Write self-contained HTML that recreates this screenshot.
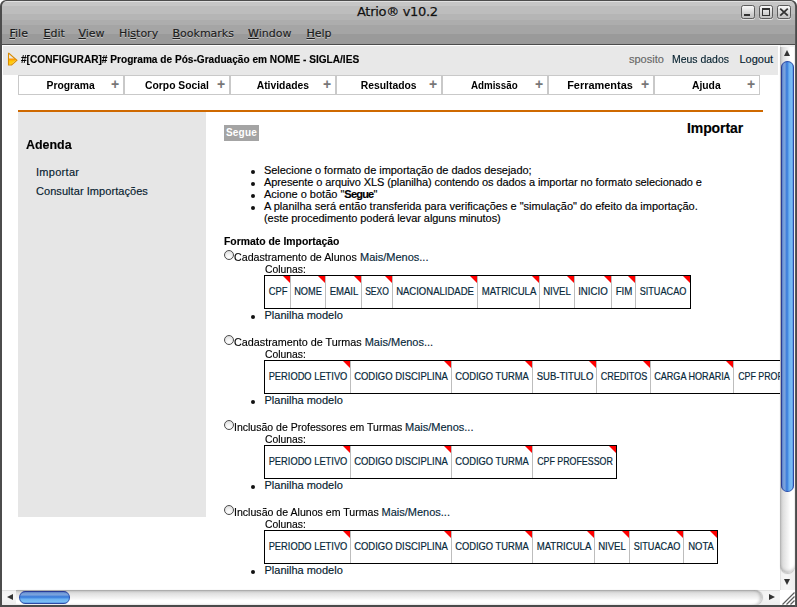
<!DOCTYPE html>
<html lang="pt-BR">
<head>
<meta charset="utf-8">
<title>Atrio® v10.2</title>
<style>
html,body{margin:0;padding:0;width:797px;height:607px;overflow:hidden;background:#fff;}
body{position:relative;font-family:"Liberation Sans",sans-serif;font-size:11px;line-height:12px;color:#000;}
*{box-sizing:border-box;}
.abs,.t{position:absolute;}
.t{white-space:nowrap;line-height:12px;font-size:11px;transform-origin:0 50%;}
a{color:inherit;text-decoration:none;}
/* ---------- window frame ---------- */
#frame{position:absolute;left:0;top:0;width:797px;height:607px;background:#4c4c4c;border-radius:6px 6px 0 0;}
#frameR{position:absolute;left:795px;top:6px;width:2px;height:601px;background:linear-gradient(to right,#595959 0,#595959 1px,#4a4a4a 1px,#4a4a4a 2px);z-index:30;}
#titlebar{position:absolute;left:2px;top:1px;width:793px;height:43px;border-radius:5px 5px 0 0;
  background:linear-gradient(to bottom,#e0e0e0 0,#e0e0e0 1px,#c6c6c6 1px,#c6c6c6 5px,#bdbdbd 5px,#bdbdbd 13px,#b5b5b5 13px,#b5b5b5 19px,#adadad 19px,#adadad 24px,#a5a5a5 24px,#a5a5a5 33px,#9a9a9a 33px,#9a9a9a 43px);}
#client{position:absolute;left:2px;top:45px;width:793px;height:560px;background:#fff;}
#wtitle{left:357px;top:3px;font-family:'DejaVu Sans',sans-serif;font-size:13px;letter-spacing:-.3px;line-height:18px;color:#111;text-shadow:0 1px 0 rgba(255,255,255,.35);}
.mi{top:27px;font-family:'DejaVu Sans',sans-serif;font-size:11px;line-height:14px;color:#1c1c1c;text-shadow:0 1px 0 rgba(255,255,255,.45);}
.mi,#wtitle{-webkit-text-stroke:.25px currentColor;}
.mi u{text-decoration:underline;text-underline-offset:1px;text-decoration-thickness:1px;}
.wb{position:absolute;top:5px;width:14px;height:14px;border:1px solid #5c5c5c;border-radius:2.5px;
  background:linear-gradient(to bottom,#f8f8f8 0,#e4e4e4 35%,#cecece 70%,#c2c2c2 100%);box-shadow:0 1px 0 rgba(255,255,255,.6),0 0 1px rgba(255,255,255,.4);}
/* ---------- page ---------- */
#band{left:3px;top:46px;width:775px;height:29px;background:#e8e8e8;}
.nav{top:75px;width:106px;height:20px;border:1px solid #c9c9c9;background:#fff;}
.nav b{position:absolute;left:0;top:3px;width:103px;text-align:center;font-size:11px;line-height:12px;white-space:nowrap;}
.nav b span{display:inline-block;transform:scaleX(.94);}
.nav i{position:absolute;right:3px;top:1px;width:10px;text-align:center;font-style:normal;font-weight:bold;font-size:14px;line-height:15px;color:#777;}
#rule{left:18px;top:110px;width:745px;height:2px;background:#cf6900;}
#side{left:18px;top:112px;width:188px;height:405px;background:#e6e6e6;}
.sx{display:inline-block;transform-origin:0 50%;}
.lk2{color:#07283a;}
.lnk{color:#05202e;-webkit-text-stroke:.4px #05202e;}
.t{-webkit-text-stroke:.15px currentColor;}
#segue{left:224px;top:125px;width:35px;height:16px;background:#a4a4a4;color:#fff;font-weight:bold;font-size:10px;line-height:16px;text-align:center;letter-spacing:.2px;}
.dot{position:absolute;width:4px;height:4px;margin:.5px 0 0 .5px;border-radius:50%;background:#111;}
.radio{position:absolute;width:10px;height:10px;border-radius:50%;border:1px solid #4c4c4c;
  background:radial-gradient(circle at 50% 75%,#fff 0,#f4f4f4 35%,#d6d6d6 100%);}
.tb{position:absolute;height:34px;border:1px solid #000;background:#fff;white-space:nowrap;font-size:0;}
.tb span{position:relative;display:inline-block;height:32px;border-right:1px solid #bdbdbd;font-size:11px;line-height:12px;vertical-align:top;overflow:hidden;}
.tb span:last-child{border-right:0;}
.tb span::after{content:"";position:absolute;right:0;top:0;border-style:solid;border-width:0 7px 7px 0;border-color:transparent #f00 transparent transparent;}
.tb span em{color:#07283a;-webkit-text-stroke:.2px #07283a;position:absolute;left:50%;top:9px;font-style:normal;transform-origin:50% 50%;}
/* ---------- scrollbars ---------- */
#vs{left:780px;top:45px;width:15px;height:545px;z-index:20;background:linear-gradient(to right,#cfcfcf 0,#f1f1f1 1px,#f6f6f6 7px,#ececec 15px);}
#vtrack{left:780px;top:47px;width:15px;height:526px;z-index:21;border-radius:0 0 7.5px 7.5px;
  background:linear-gradient(to right,#b0b0b0 0,#c8c8c8 1px,#dedede 3px,#efefef 7px,#f7f7f7 9px,#fff 10.5px,#fff 13.5px,#f0f0f0 15px);box-shadow:0 1px 1px rgba(0,0,0,.2),inset 0 -3px 3px -1px rgba(0,0,0,.18);}
#hs{left:2px;top:590px;width:778px;height:15px;z-index:20;background:linear-gradient(to bottom,#cfcfcf 0,#f1f1f1 1px,#f6f6f6 7px,#ececec 15px);}
#htrack{left:16px;top:590px;width:746px;height:15px;z-index:21;border-radius:0 7.5px 7.5px 0;
  background:linear-gradient(to bottom,#a0a0a0 0,#c4c4c4 1px,#dedede 3px,#efefef 7px,#f7f7f7 9px,#fff 10.5px,#fff 13px,#f0f0f0 15px);box-shadow:1px 0 1px rgba(0,0,0,.2),inset -3px 0 3px -1px rgba(0,0,0,.18);}
#corner{left:780px;top:590px;width:15px;height:15px;background:#fff;z-index:21;}
#vthumb{left:781px;top:61px;width:13px;height:431px;border-radius:6.5px;z-index:22;box-shadow:inset 0 0 0 1px rgba(40,58,150,.7);
  background:linear-gradient(to right,#2c3f94 0,#2c3f94 1px,#6c96d6 1.6px,#7ea5dd 4px,#4a85dc 5px,#3b7cd9 6px,#4a8ee4 7px,#6db1f0 8px,#78bcf4 10.5px,#5a98e4 12px,#3a66c0 12.6px,#35509f 13px);}
#hthumb{left:19px;top:591px;width:51px;height:13px;border-radius:6.5px;z-index:22;box-shadow:inset 0 0 0 1px rgba(40,58,150,.7);
  background:linear-gradient(to bottom,#2c3f94 0,#2c3f94 1px,#6c96d6 1.6px,#7ea5dd 4px,#4a85dc 5px,#3b7cd9 6px,#4a8ee4 7px,#6db1f0 8px,#78bcf4 10.5px,#5a98e4 12px,#3a66c0 12.6px,#35509f 13px);}
.arr{position:absolute;width:0;height:0;border-style:solid;z-index:23;}
</style>
</head>
<body>
<div id="frame"></div>
<div id="titlebar"></div>
<div id="client"></div>
<div id="frameR"></div>

<!-- title bar -->
<div class="t" id="wtitle">Atrio® v10.2</div>
<div class="t mi" style="left:9.5px"><u>F</u>ile</div>
<div class="t mi" style="left:43.5px"><u>E</u>dit</div>
<div class="t mi" style="left:78.5px"><u>V</u>iew</div>
<div class="t mi" style="left:119px">Hi<u>s</u>tory</div>
<div class="t mi" style="left:172.5px"><u>B</u>ookmarks</div>
<div class="t mi" style="left:248px"><u>W</u>indow</div>
<div class="t mi" style="left:306.5px"><u>H</u>elp</div>
<div class="wb" style="left:741px"><div class="abs" style="left:2px;top:8px;width:6px;height:2px;background:#333"></div></div>
<div class="wb" style="left:759px"><div class="abs" style="left:2px;top:2px;width:8px;height:8px;border:1px solid #333;border-top-width:2px"></div></div>
<div class="wb" style="left:777px"><svg class="abs" style="left:1px;top:1px" width="10" height="10" viewBox="0 0 10 10"><path d="M1.2 1.6 L8.8 8.6 M8.8 1.6 L1.2 8.6" stroke="#333" stroke-width="1.8" fill="none"/></svg></div>

<!-- header band -->
<div class="abs" id="band"></div>
<svg class="abs" style="left:7px;top:52px" width="12" height="14" viewBox="0 0 12 14"><defs><linearGradient id="ag" x1="0" y1="0" x2="0" y2="1"><stop offset="0" stop-color="#ff9500"/><stop offset=".28" stop-color="#ffa200"/><stop offset=".36" stop-color="#ffc400"/><stop offset="1" stop-color="#ffd21a"/></linearGradient></defs><path d="M1.6 6.4 L7.6 6.4 L9.6 8.4 L4.9 12.8 L1.6 12.8 Z" fill="url(#ag)"/><path d="M8.3 8.7 L4.6 12.2" stroke="#fff6d8" stroke-width="1" stroke-dasharray="1 .8" fill="none"/><path d="M1.5 1.4 L1.5 13 L4.6 13 L9.9 8.3 L1.9 1.4 Z" fill="none" stroke="#d98b00" stroke-width="1.1" stroke-linejoin="miter"/></svg>
<div class="t" style="left:21px;top:53px;font-weight:bold"><span style="display:inline-block;transform:scaleX(.919);transform-origin:0 50%">#[CONFIGURAR]# Programa de Pós-Graduação em NOME - SIGLA/IES</span></div>
<div class="t" style="left:629px;top:53px;color:#666">sposito</div>
<div class="t lnk" style="left:671.5px;top:53px"><span style="display:inline-block;transform:scaleX(.95);transform-origin:0 50%">Meus dados</span></div>
<div class="t lnk" style="left:739.5px;top:53px">Logout</div>

<!-- nav -->
<div class="abs nav" style="left:18px"><b><span>Programa</span></b><i>+</i></div>
<div class="abs nav" style="left:124px"><b><span>Corpo Social</span></b><i>+</i></div>
<div class="abs nav" style="left:230px"><b><span>Atividades</span></b><i>+</i></div>
<div class="abs nav" style="left:336px"><b><span>Resultados</span></b><i>+</i></div>
<div class="abs nav" style="left:442px"><b><span style="transform:scaleX(.89)">Admissão</span></b><i>+</i></div>
<div class="abs nav" style="left:548px"><b><span style="transform:scaleX(.995)">Ferramentas</span></b><i>+</i></div>
<div class="abs nav" style="left:654px"><b><span>Ajuda</span></b><i>+</i></div>

<div class="abs" id="rule"></div>
<div class="abs" id="side"></div>
<div class="t" style="left:26px;top:137px;font-size:13px;line-height:15px;font-weight:bold"><span style="display:inline-block;transform:scaleX(.957);transform-origin:0 50%">Adenda</span></div>
<div class="t lnk" style="left:36px;top:166px;letter-spacing:.29px">Importar</div>
<div class="t lnk" style="left:36px;top:185px;letter-spacing:.06px">Consultar Importações</div>

<!-- main -->
<div class="abs" id="segue">Segue</div>
<div class="t" style="left:687px;top:120px;font-size:14px;line-height:16px;font-weight:bold;letter-spacing:-.1px">Importar</div>

<div class="dot" style="left:250px;top:169px"></div>
<div class="dot" style="left:250px;top:181px"></div>
<div class="dot" style="left:250px;top:193px"></div>
<div class="dot" style="left:250px;top:205px"></div>
<div class="t" style="left:264px;top:164px;letter-spacing:-.04px">Selecione o formato de importação de dados desejado;</div>
<div class="t" style="left:264px;top:176px;letter-spacing:-.09px">Apresente o arquivo XLS (planilha) contendo os dados a importar no formato selecionado e</div>
<div class="t" style="left:264px;top:188px">Acione o botão "<b style="letter-spacing:-.8px">Segue</b>"</div>
<div class="t" style="left:264px;top:200px;letter-spacing:-.01px">A planilha será então transferida para verificações e "simulação" do efeito da importação.</div>
<div class="t" style="left:264px;top:212px;letter-spacing:-.05px">(este procedimento poderá levar alguns minutos)</div>

<div class="t" style="left:224px;top:235px;font-weight:bold"><span style="display:inline-block;transform:scaleX(.944);transform-origin:0 50%">Formato de Importação</span></div>

<!-- group 1 -->
<div class="radio" style="left:223.5px;top:250px"></div>
<div class="t" style="left:234px;top:251px"><span class="sx" style="transform:scaleX(0.97)">Cadastramento de Alunos</span></div><div class="t lk2" style="left:360px;top:251px">Mais/Menos...</div>
<div class="t" style="left:264.5px;top:263px"><span style="display:inline-block;transform:scaleX(.94);transform-origin:0 50%">Colunas:</span></div>
<div class="tb" style="left:264px;top:275px"><span style="width:26px"><em style="transform:translateX(-50%) scaleX(0.85)">CPF</em></span><span style="width:35px"><em style="transform:translateX(-50%) scaleX(0.839)">NOME</em></span><span style="width:36px"><em style="transform:translateX(-50%) scaleX(0.869)">EMAIL</em></span><span style="width:31px"><em style="transform:translateX(-50%) scaleX(0.775)">SEXO</em></span><span style="width:85px"><em style="transform:translateX(-50%) scaleX(0.865)">NACIONALIDADE</em></span><span style="width:62px"><em style="transform:translateX(-50%) scaleX(0.872)">MATRICULA</em></span><span style="width:35px"><em style="transform:translateX(-50%) scaleX(0.871)">NIVEL</em></span><span style="width:37px"><em style="transform:translateX(-50%) scaleX(0.883)">INICIO</em></span><span style="width:24px"><em style="transform:translateX(-50%) scaleX(0.881)">FIM</em></span><span style="width:54px"><em style="transform:translateX(-50%) scaleX(0.83)">SITUACAO</em></span></div>
<div class="dot" style="left:250px;top:314px"></div>
<div class="t lnk" style="left:264.5px;top:309px">Planilha modelo</div>

<!-- group 2 -->
<div class="radio" style="left:223.5px;top:335px"></div>
<div class="t" style="left:234px;top:336px"><span class="sx" style="transform:scaleX(0.981)">Cadastramento de Turmas</span></div><div class="t lk2" style="left:364.7px;top:336px">Mais/Menos...</div>
<div class="t" style="left:264.5px;top:348px"><span style="display:inline-block;transform:scaleX(.94);transform-origin:0 50%">Colunas:</span></div>
<div class="tb" style="left:264px;top:360px"><span style="width:86px"><em style="transform:translateX(-50%) scaleX(0.847)">PERIODO LETIVO</em></span><span style="width:101px"><em style="transform:translateX(-50%) scaleX(0.861)">CODIGO DISCIPLINA</em></span><span style="width:81px"><em style="transform:translateX(-50%) scaleX(0.851)">CODIGO TURMA</em></span><span style="width:64px"><em style="transform:translateX(-50%) scaleX(0.867)">SUB-TITULO</em></span><span style="width:54px"><em style="transform:translateX(-50%) scaleX(0.824)">CREDITOS</em></span><span style="width:83px"><em style="transform:translateX(-50%) scaleX(0.826)">CARGA HORARIA</em></span><span style="width:83px"><em style="transform:translateX(-50%) scaleX(0.804)">CPF PROFESSOR</em></span></div>
<div class="dot" style="left:250px;top:399px"></div>
<div class="t lnk" style="left:264.5px;top:394px">Planilha modelo</div>

<!-- group 3 -->
<div class="radio" style="left:223.5px;top:420px"></div>
<div class="t" style="left:234px;top:421px"><span class="sx" style="transform:scaleX(0.956)">Inclusão de Professores em Turmas</span></div><div class="t lk2" style="left:405px;top:421px">Mais/Menos...</div>
<div class="t" style="left:264.5px;top:433px"><span style="display:inline-block;transform:scaleX(.94);transform-origin:0 50%">Colunas:</span></div>
<div class="tb" style="left:264px;top:445px"><span style="width:86px"><em style="transform:translateX(-50%) scaleX(0.847)">PERIODO LETIVO</em></span><span style="width:101px"><em style="transform:translateX(-50%) scaleX(0.861)">CODIGO DISCIPLINA</em></span><span style="width:81px"><em style="transform:translateX(-50%) scaleX(0.851)">CODIGO TURMA</em></span><span style="width:83px"><em style="transform:translateX(-50%) scaleX(0.804)">CPF PROFESSOR</em></span></div>
<div class="dot" style="left:250px;top:484px"></div>
<div class="t lnk" style="left:264.5px;top:479px">Planilha modelo</div>

<!-- group 4 -->
<div class="radio" style="left:223.5px;top:505px"></div>
<div class="t" style="left:234px;top:506px"><span class="sx" style="transform:scaleX(0.962)">Inclusão de Alunos em Turmas</span></div><div class="t lk2" style="left:381.5px;top:506px">Mais/Menos...</div>
<div class="t" style="left:264.5px;top:518px"><span style="display:inline-block;transform:scaleX(.94);transform-origin:0 50%">Colunas:</span></div>
<div class="tb" style="left:264px;top:530px"><span style="width:86px"><em style="transform:translateX(-50%) scaleX(0.847)">PERIODO LETIVO</em></span><span style="width:101px"><em style="transform:translateX(-50%) scaleX(0.861)">CODIGO DISCIPLINA</em></span><span style="width:81px"><em style="transform:translateX(-50%) scaleX(0.851)">CODIGO TURMA</em></span><span style="width:62px"><em style="transform:translateX(-50%) scaleX(0.872)">MATRICULA</em></span><span style="width:35px"><em style="transform:translateX(-50%) scaleX(0.871)">NIVEL</em></span><span style="width:54px"><em style="transform:translateX(-50%) scaleX(0.83)">SITUACAO</em></span><span style="width:33px"><em style="transform:translateX(-50%) scaleX(0.864)">NOTA</em></span></div>
<div class="dot" style="left:250px;top:569px"></div>
<div class="t lnk" style="left:264.5px;top:564px">Planilha modelo</div>

<!-- scrollbars -->
<div class="abs" id="vs"></div>
<div class="abs" id="hs"></div>
<div class="abs" id="vtrack"></div>
<div class="abs" id="htrack"></div>
<div class="abs" id="corner"><svg width="15" height="15" viewBox="0 0 15 15"><path d="M2.5 14.5 L14.5 2.5 M6.5 14.5 L14.5 6.5 M10.5 14.5 L14.5 10.5" stroke="#5e5e5e" stroke-width="1.2" fill="none"/></svg></div>
<div class="abs" id="vthumb"></div>
<div class="abs" id="hthumb"></div>
<div class="arr" style="left:784px;top:50px;border-width:0 3.5px 6px 3.5px;border-color:transparent transparent #333 transparent"></div>
<div class="arr" style="left:784px;top:579px;border-width:6px 3.5px 0 3.5px;border-color:#333 transparent transparent transparent"></div>
<div class="arr" style="left:7px;top:594px;border-width:3.5px 6px 3.5px 0;border-color:transparent #333 transparent transparent"></div>
<div class="arr" style="left:769px;top:594px;border-width:3.5px 0 3.5px 6px;border-color:transparent transparent transparent #333"></div>
</body>
</html>
